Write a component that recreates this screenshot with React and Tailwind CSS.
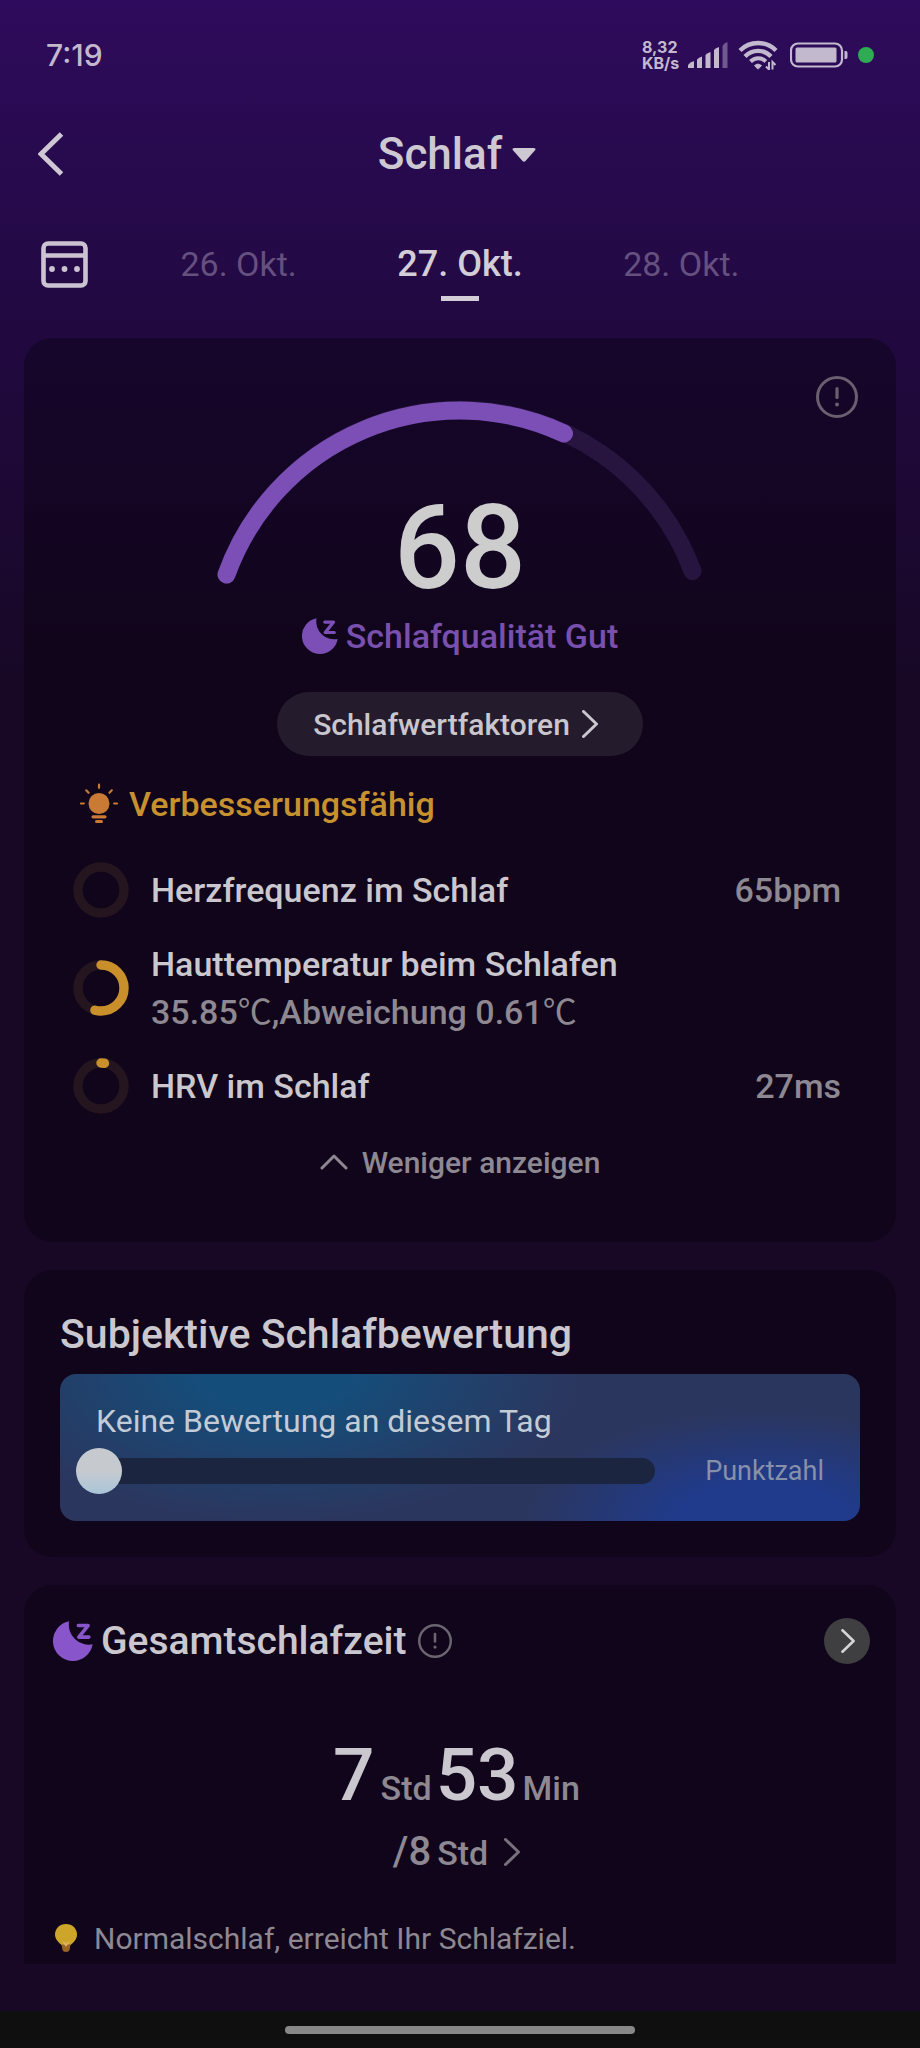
import { useState } from "react";

const days = ["26. Okt.", "27. Okt.", "28. Okt."];

const factors = [
  { label: "Herzfrequenz im Schlaf", value: "65bpm", progress: 0 },
  { label: "Hauttemperatur beim Schlafen", detail: ["35.85", ",Abweichung 0.61"], progress: 0.54 },
  { label: "HRV im Schlaf", value: "27ms", progress: 0.025 },
];

function MoonIcon({ className }) {
  return (
    <svg viewBox="0 0 36 36" className={className} aria-hidden="true">
      <path d="M14.5 0.3A18 18 0 1 0 35.7 21A18 18 0 0 1 14.5 0.3Z" fill="currentColor" />
      <path
        d="M22.8 4.1H31.6L23.2 14.5H32.3"
        fill="none"
        stroke="currentColor"
        strokeWidth="3.2"
        strokeLinecap="round"
        strokeLinejoin="round"
      />
    </svg>
  );
}

function InfoIcon({ className }) {
  return (
    <svg viewBox="0 0 42 42" className={className} fill="none" stroke="currentColor" aria-hidden="true">
      <circle cx="21" cy="21" r="19.5" strokeWidth="3" />
      <path d="M21 12.5V21.5" strokeWidth="3.2" strokeLinecap="round" />
      <circle cx="21" cy="28.5" r="2" fill="currentColor" stroke="none" />
    </svg>
  );
}

function Chevron({ className }) {
  return (
    <svg viewBox="0 0 16 28" className={className} fill="none" aria-hidden="true">
      <path d="M1.5 1.5L14.5 14L1.5 26.5" stroke="currentColor" strokeWidth="3" strokeLinecap="round" strokeLinejoin="round" />
    </svg>
  );
}

function Ring({ progress }) {
  const length = 2 * Math.PI * 23;
  return (
    <svg viewBox="0 0 56 56" className="size-14 shrink-0" fill="none" strokeWidth="9.4" aria-hidden="true">
      <circle cx="28" cy="28" r="23" stroke="#24151f" />
      {progress > 0 && (
        <circle
          cx="28"
          cy="28"
          r="23"
          stroke="#c98f2b"
          strokeLinecap="round"
          strokeDasharray={`${length * progress} ${length}`}
          transform="rotate(-90 28 28)"
        />
      )}
    </svg>
  );
}

function StatusBar() {
  return (
    <div className="flex h-[110px] items-center justify-between px-[46px] text-[#c3b9cf]">
      <span className="font-[Inter] text-[30px] font-medium">7:19</span>
      <div className="flex items-center">
        <div className="w-10 font-[Inter] text-base leading-4 font-bold">
          <div>8,32</div>
          <div>KB/s</div>
        </div>
        <svg viewBox="0 0 40 26" className="ml-1.5 h-[26px] w-10" fill="currentColor" aria-hidden="true">
          <path d="M0 26V23Q2 20 6 19V26Z" />
          <path d="M9 26V17.5Q11 15.5 14 14.5V26Z" />
          <path d="M17.5 26V13Q19.5 11 22.5 10V26Z" />
          <path d="M26 26V8Q28 6 31 5V26Z" />
          <path d="M34.5 26V4Q36 1 39.5 0V26Z" opacity="0.45" />
        </svg>
        <svg viewBox="0 0 40 30" className="ml-2.5 h-[30px] w-10" fill="none" stroke="currentColor" aria-hidden="true">
          <path d="M2 10.5C12 0.5 28 0.5 38 10.5" strokeWidth="4.4" />
          <path d="M7 16.5C14.5 9 25.5 9 33 16.5" strokeWidth="4.4" />
          <path d="M12.5 21.5C17 17 23.500 17 27.8 21.5" strokeWidth="4" />
          <path d="M16.5 25.5Q20 22.5 23.5 25.5L20.5 28.8H19.5Z" fill="currentColor" strokeWidth="1" />
          <path d="M31 22V29.5L28 26.5M34.5 29.5V22L37.5 25" strokeWidth="2" />
        </svg>
        <svg viewBox="0 0 58 26" className="ml-3 h-[26px] w-[58px]" aria-hidden="true">
          <rect x="1" y="1.5" width="51" height="23" rx="7" fill="none" stroke="currentColor" strokeWidth="2.2" />
          <rect x="5.5" y="5.5" width="41" height="15" rx="1.5" fill="currentColor" />
          <path d="M54.5 9H56Q57.5 9 57.5 11V15Q57.5 17 56 17H54.5Z" fill="currentColor" />
        </svg>
        <span className="ml-2.5 size-4 rounded-full bg-[#2fab53]" />
      </div>
    </div>
  );
}

function Header() {
  return (
    <header className="grid h-[88px] grid-cols-[1fr_auto_1fr] items-center px-[38px]">
      <button aria-label="Zurück" className="justify-self-start text-[#cfc8d4]">
        <svg viewBox="0 0 26 44" className="h-11 w-[26px]" fill="none" aria-hidden="true">
          <path d="M23.5 2L3 22L23.5 42" stroke="currentColor" strokeWidth="5" strokeLinejoin="miter" />
        </svg>
      </button>
      <button className="flex items-center gap-2.5 pr-1.5 text-[44px] leading-[52px] font-medium text-[#cdc8d2]">
        Schlaf
        <svg viewBox="0 0 24 14" className="mt-0.5 h-3.5 w-6" fill="currentColor" aria-hidden="true">
          <path d="M2 0H22Q24.5 0.5 22.8 2.5L13.5 13Q12 14.4 10.5 13L1.2 2.5Q-0.5 0.5 2 0Z" />
        </svg>
      </button>
    </header>
  );
}

function DayPicker() {
  const [selected, setSelected] = useState(days[1]);

  return (
    <div className="flex h-[132px] items-center px-10">
      <button aria-label="Kalender" className="w-[88px] text-[#cbc3d1]">
        <svg viewBox="0 0 48 48" className="size-12" fill="none" stroke="currentColor" aria-hidden="true">
          <rect x="3.5" y="3.5" width="42" height="42" rx="4.5" strokeWidth="4.6" />
          <path d="M4 15.5H45" strokeWidth="4.6" />
          <g fill="currentColor" stroke="none">
            <circle cx="12" cy="29" r="2.9" />
            <circle cx="24.5" cy="29" r="2.9" />
            <circle cx="37" cy="29" r="2.9" />
          </g>
        </svg>
      </button>
      <nav className="mr-[88px] grid flex-1 grid-cols-3 items-center">
        {days.map((day) => (
          <button
            key={day}
            onClick={() => setSelected(day)}
            className={`relative h-12 text-center ${
              selected === day
                ? "text-[36px] leading-[40px] font-medium text-[#d3cdd8]"
                : "text-[34px] leading-[40px] text-[#65507f]"
            }`}
          >
            {day}
            {selected === day && (
              <span className="absolute top-full left-1/2 mt-2 h-[5px] w-[38px] -translate-x-1/2 bg-[#d3cdd8]" />
            )}
          </button>
        ))}
      </nav>
    </div>
  );
}

function BulbRays() {
  return (
    <svg viewBox="0 0 40 42" className="h-[42px] w-10" fill="#c97a35" stroke="#c97a35" strokeLinecap="round" aria-hidden="true">
      <circle cx="20" cy="20.5" r="10.5" stroke="none" />
      <g strokeWidth="2.2">
        <path d="M20 1.7V4.8M7.2 7.3L9.6 9.7M32.8 7.3L30.4 9.7M2 20.5H4.8M35.2 20.5H38" />
      </g>
      <path d="M14 33.8H26" strokeWidth="3.2" />
      <path d="M17.5 38.6H22.5" strokeWidth="3" />
    </svg>
  );
}

function ScoreCard() {
  const [expanded, setExpanded] = useState(true);

  return (
    <section className="relative mt-2 rounded-[28px] bg-black/30 px-[49px] pt-16 pb-[60px]">
      <button aria-label="Info" className="absolute top-[38px] right-[38px] text-[#695f6f]">
        <InfoIcon className="size-[42px]" />
      </button>

      <div className="grid justify-items-center">
        <svg viewBox="200 402 520 184" className="col-start-1 row-start-1 h-[184px] w-[520px] overflow-visible" fill="none" strokeWidth="18" strokeLinecap="round" aria-hidden="true">
          <path d="M226.5 574.5A248 248 0 0 1 692.5 571" stroke="#27153f" />
          <path d="M226.5 574.5A248 248 0 0 1 564 433.5" stroke="#7b4fb5" />
        </svg>
        <p className="col-start-1 row-start-1 self-end text-[116px] leading-[76px] font-medium text-[#cdcdcd]">68</p>
      </div>

      <p className="mt-7 flex h-11 items-center justify-center gap-2 text-[34px] font-medium text-[#7950ae]">
        <MoonIcon className="size-9 text-[#7b4fb5]" />
        Schlafqualität Gut
      </p>

      <div className="mt-[34px] flex justify-center">
        <button className="flex h-16 items-center gap-3 rounded-full bg-[#241c2c] pr-[45px] pl-9 text-[30px] font-medium text-[#cac6cd]">
          Schlafwertfaktoren
          <Chevron className="h-7 w-4" />
        </button>
      </div>

      <h2 className="mt-[26px] flex h-11 items-center gap-2.5 pl-1.5 text-[34px] font-medium text-[#c8912f]">
        <BulbRays />
        Verbesserungsfähig
      </h2>

      {expanded && (
        <ul className="mt-9 flex flex-col gap-[22px] pr-1.5 text-[34px] leading-[48px] font-medium text-[#cbc7ce]">
          {factors.map((item) => (
            <li key={item.label} className="flex items-center gap-[22px]">
              <Ring progress={item.progress} />
              <div className="flex-1">
                <p>{item.label}</p>
                {item.detail && (
                  <p className="text-[#8d8891]">
                    {item.detail.map((part) => (
                      <span key={part}>
                        {part}
                        <span className="font-normal">℃</span>
                      </span>
                    ))}
                  </p>
                )}
              </div>
              {item.value && <span className="text-[#8d8891]">{item.value}</span>}
            </li>
          ))}
        </ul>
      )}

      <button
        onClick={() => setExpanded(!expanded)}
        className="mx-auto mt-7 flex h-10 items-center gap-3.5 text-[30px] font-medium text-[#8d8891]"
      >
        <svg viewBox="0 0 28 16" className="h-4 w-7" fill="none" aria-hidden="true">
          <path d="M2 14L14 2L26 14" stroke="currentColor" strokeWidth="3" strokeLinecap="round" strokeLinejoin="round" />
        </svg>
        Weniger anzeigen
      </button>
    </section>
  );
}

function RatingCard() {
  const [rating, setRating] = useState(0);

  return (
    <section className="mt-7 rounded-[28px] bg-black/30 px-9 pt-10 pb-9">
      <h2 className="text-[41px] leading-[48px] font-medium text-[#cbc7ce]">Subjektive Schlafbewertung</h2>
      <div className="mt-4 rounded-2xl bg-[#2b365e] bg-[radial-gradient(ellipse_38%_100%_at_27%_0%,#154d7a_25%,transparent),radial-gradient(ellipse_30%_75%_at_88%_100%,#203b8c_35%,transparent)] pt-6 pr-9 pb-[27px] pl-4">
        <label htmlFor="rating" className="block pl-5 text-[32px] leading-[46px] text-[#c3cbd6]">
          Keine Bewertung an diesem Tag
        </label>
        <div className="mt-1 flex items-center">
          <input
            id="rating"
            type="range"
            min="0"
            max="100"
            value={rating}
            onChange={(e) => setRating(Number(e.target.value))}
            className="mr-[50px] h-[46px] min-w-0 flex-1 appearance-none bg-transparent [&::-webkit-slider-runnable-track]:h-[26px] [&::-webkit-slider-runnable-track]:rounded-full [&::-webkit-slider-runnable-track]:bg-[#1b2540] [&::-webkit-slider-thumb]:-mt-2.5 [&::-webkit-slider-thumb]:size-[46px] [&::-webkit-slider-thumb]:appearance-none [&::-webkit-slider-thumb]:rounded-full [&::-webkit-slider-thumb]:bg-linear-to-b [&::-webkit-slider-thumb]:from-[#c6cacf] [&::-webkit-slider-thumb]:from-50% [&::-webkit-slider-thumb]:to-[#a9c5d9]"
          />
          <span className="text-[27px] text-[#8790a9]">Punktzahl</span>
        </div>
      </div>
    </section>
  );
}

function TotalSleepCard() {
  return (
    <section className="mt-7 rounded-t-[28px] bg-black/30 pt-8 pr-[26px] pl-[29px]">
      <div className="flex h-12 items-center">
        <MoonIcon className="size-10 text-[#8855cb]" />
        <h2 className="ml-2 text-[39px] font-medium text-[#cbc7ce]">Gesamtschlafzeit</h2>
        <button aria-label="Info" className="ml-3 text-[#6b6570]">
          <InfoIcon className="size-[34px]" />
        </button>
        <button aria-label="Details" className="ml-auto flex size-[46px] items-center justify-center rounded-full bg-[#3f3e40] text-[#d5d5d5]">
          <Chevron className="ml-0.5 h-6 w-3.5" />
        </button>
      </div>

      <p className="mt-[66px] flex items-baseline justify-center pr-2.5 text-[34px] leading-[88px] font-medium text-[#8d8891]">
        <span className="text-[73px] text-[#cbc7ce]">7</span>
        <span className="ml-1.5">Std</span>
        <span className="ml-1 text-[73px] text-[#cbc7ce]">53</span>
        <span className="ml-1">Min</span>
      </p>

      <button className="mx-auto -mt-1 flex h-12 items-center pr-2.5 font-medium text-[#8d8891]">
        <span className="flex items-baseline gap-1.5 text-[34px]">
          <span className="text-[40px]">/8</span>
          Std
        </span>
        <Chevron className="ml-4 h-7 w-4 text-[#77717c]" />
      </button>

      <p className="mt-9 flex h-[52px] items-center text-[30px] text-[#8d8891]">
        <svg viewBox="0 0 22 28" className="mr-[17px] ml-0.5 h-7 w-[22px]" aria-hidden="true">
          <path d="M11 0C4.5 0 0 4.8 0 10.6C0 15.5 3.5 18.5 6.5 21H15.5C18.5 18.5 22 15.5 22 10.6C22 4.8 17.5 0 11 0Z" fill="#cda52b" />
          <path d="M6.5 20.5H15.5L14.5 26Q14 28 11 28Q8 28 7.5 26Z" fill="#9a6424" />
          <path d="M8.5 18L11 21.5L13.5 18" fill="none" stroke="#e2b86a" strokeWidth="1.4" />
        </svg>
        Normalschlaf, erreicht Ihr Schlafziel.
      </p>
    </section>
  );
}

export default function App() {
  return (
    <div className="flex min-h-screen flex-col bg-[#180826] bg-[linear-gradient(to_bottom,#2e0b5c_0px,#210940_330px,#180826_680px)] font-[Roboto,'Noto_Sans_CJK_SC',sans-serif]">
      <StatusBar />
      <Header />
      <DayPicker />
      <main className="flex-1 px-6 pb-10">
        <ScoreCard />
        <RatingCard />
        <TotalSleepCard />
      </main>
      <footer className="flex h-[37px] items-center justify-center bg-[#0f0f0f]">
        <div className="h-2 w-[350px] rounded-full bg-[#888888]" />
      </footer>
    </div>
  );
}
